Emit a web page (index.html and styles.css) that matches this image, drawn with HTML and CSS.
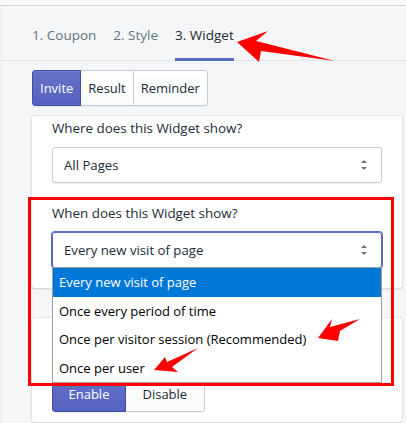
FILE: index.html
```html
<!DOCTYPE html>
<html>
<head>
<meta charset="utf-8">
<link rel="stylesheet" href="styles.css">
</head>
<body>
<div class="top"></div>
<div class="frame">
  <nav class="tabs">
    <span class="tab">1. Coupon</span>
    <span class="tab">2. Style</span>
    <span class="tab active">3. Widget</span>
  </nav>
  <div class="content">
    <div class="btn-group">
      <button class="btn primary">Invite</button>
      <button class="btn">Result</button>
      <button class="btn">Reminder</button>
    </div>
    <div class="card">
      <div class="label">Where does this Widget show?</div>
      <div class="select">
        <span>All Pages</span>
        <svg class="arrows" viewBox="0 0 20 20"><path d="M13 8l-3-3-3 3h6zm-.1 4L10 15l-2.9-3h5.8z"/></svg>
      </div>
      <div class="label second">When does this Widget show?</div>
      <div class="select focused">
        <span>Every new visit of page</span>
        <svg class="arrows" viewBox="0 0 20 20"><path d="M13 8l-3-3-3 3h6zm-.1 4L10 15l-2.9-3h5.8z"/></svg>
        <ul class="dropdown">
          <li class="selected">Every new visit of page</li>
          <li>Once every period of time</li>
          <li>Once per visitor session (Recommended)</li>
          <li>Once per user</li>
        </ul>
      </div>
    </div>
    <div class="card card2">
      <div class="btn-group">
        <button class="btn primary wide">Enable</button>
        <button class="btn wide disable">Disable</button>
      </div>
    </div>
  </div>
</div>
<svg class="annot" width="406" height="423" viewBox="0 0 406 423">
  <polygon points="237,42 268,31 256,41 335,61 261,51 259,62" fill="#ff0000"/>
  <rect x="29.5" y="198.5" width="363" height="186" fill="none" stroke="#ff0000" stroke-width="3"/>
  <polygon points="318,338 332,319 330,327 360,319 340,331 338,341" fill="#ff0000"/>
  <polygon points="154,370 165,357 167,362 198,348 172,367 178,372" fill="#ff0000"/>
</svg>
</body>
</html>
```

FILE: styles.css
```css
html, body {
  margin: 0;
  padding: 0;
}
body {
  width: 406px;
  height: 423px;
  overflow: hidden;
  background: #f4f6f8;
  font-family: "Open Sans", "Noto Sans", sans-serif;
  font-size: 13px;
  color: #212b36;
  position: relative;
}
.top {
  height: 5px;
  background: #f7f8fa;
  border-bottom: 1px solid #d5d9de;
}
.frame {
  margin-left: 1px;
  border-left: 1px solid #e3e6ea;
  height: 417px;
  overflow: hidden;
}
.tabs {
  display: flex;
  gap: 17px;
  padding-left: 30px;
  border-bottom: 1px solid #dfe3e8;
  height: 55px;
  box-sizing: border-box;
}
.tab {
  font-size: 13.5px;
  line-height: 20px;
  padding-top: 19px;
  height: 55px;
  box-sizing: border-box;
  color: #637381;
  border-bottom: 3px solid transparent;
}
.tab.active {
  color: #212b36;
  border-bottom-color: #5c6ac4;
}
.content {
  padding: 9px 0 0 30px;
}
.btn-group {
  display: flex;
}
.btn {
  font-family: inherit;
  font-size: 13px;
  color: #212b36;
  height: 36px;
  padding: 0 7px;
  margin: 0;
  background: linear-gradient(180deg, #fff, #f9fafb);
  border: 1px solid #c4cdd5;
  box-shadow: 0 1px 0 0 rgba(22, 29, 37, .05);
  border-radius: 0;
  margin-left: -1px;
}
.btn:first-child {
  margin-left: 0;
  border-radius: 3px 0 0 3px;
}
.btn:last-child {
  border-radius: 0 3px 3px 0;
}
.btn.primary {
  color: #fff;
  background: linear-gradient(180deg, #6371c7, #5563c1);
  border-color: #3f4eae;
  box-shadow: inset 0 1px 0 0 #6f7bcb, 0 1px 0 0 rgba(22, 29, 37, .05);
  position: relative;
}
.btn.wide {
  padding: 0 15.5px;
}
.btn.disable {
  padding: 0 16.5px;
}
.card {
  margin-top: 10px;
  width: 370px;
  background: #fff;
  border-radius: 3px;
  box-shadow: 0 0 0 1px rgba(63, 63, 68, .06), 0 1px 3px 0 rgba(63, 63, 68, .15);
  padding: 2px 20px 20px 20px;
  box-sizing: border-box;
}
.label {
  font-size: 13.4px;
  line-height: 20px;
}
.label.second {
  margin-top: 20px;
}
.select {
  margin-top: 9px;
  position: relative;
  height: 36px;
  box-sizing: border-box;
  width: 330px;
  border: 1px solid #c4cdd5;
  border-radius: 3px;
  box-shadow: 0 1px 0 0 rgba(22, 29, 37, .05);
  display: flex;
  align-items: center;
  padding-left: 11px;
  font-size: 13.2px;
}
.select.focused {
  border-color: #5c6ac4;
  box-shadow: 0 0 0 1px #5c6ac4;
}
.arrows {
  position: absolute;
  right: 7px;
  top: 7px;
  width: 20px;
  height: 20px;
  fill: #637381;
}
.dropdown {
  position: absolute;
  left: -1px;
  top: 34px;
  width: 330px;
  box-sizing: border-box;
  margin: 0;
  padding: 0;
  list-style: none;
  background: #fff;
  border: 1px solid #a0a0a0;
  z-index: 5;
}
.dropdown li {
  height: 28.5px;
  line-height: 28.5px;
  padding-left: 6px;
  font-size: 13px;
  color: #000;
  white-space: nowrap;
}
.dropdown li.selected {
  background: #0078d7;
  color: #fff;
}
.card2 {
  margin-top: 30px;
  height: 104px;
  padding-top: 58px;
}
.annot {
  position: absolute;
  left: 0;
  top: 0;
  z-index: 10;
  pointer-events: none;
}
```
